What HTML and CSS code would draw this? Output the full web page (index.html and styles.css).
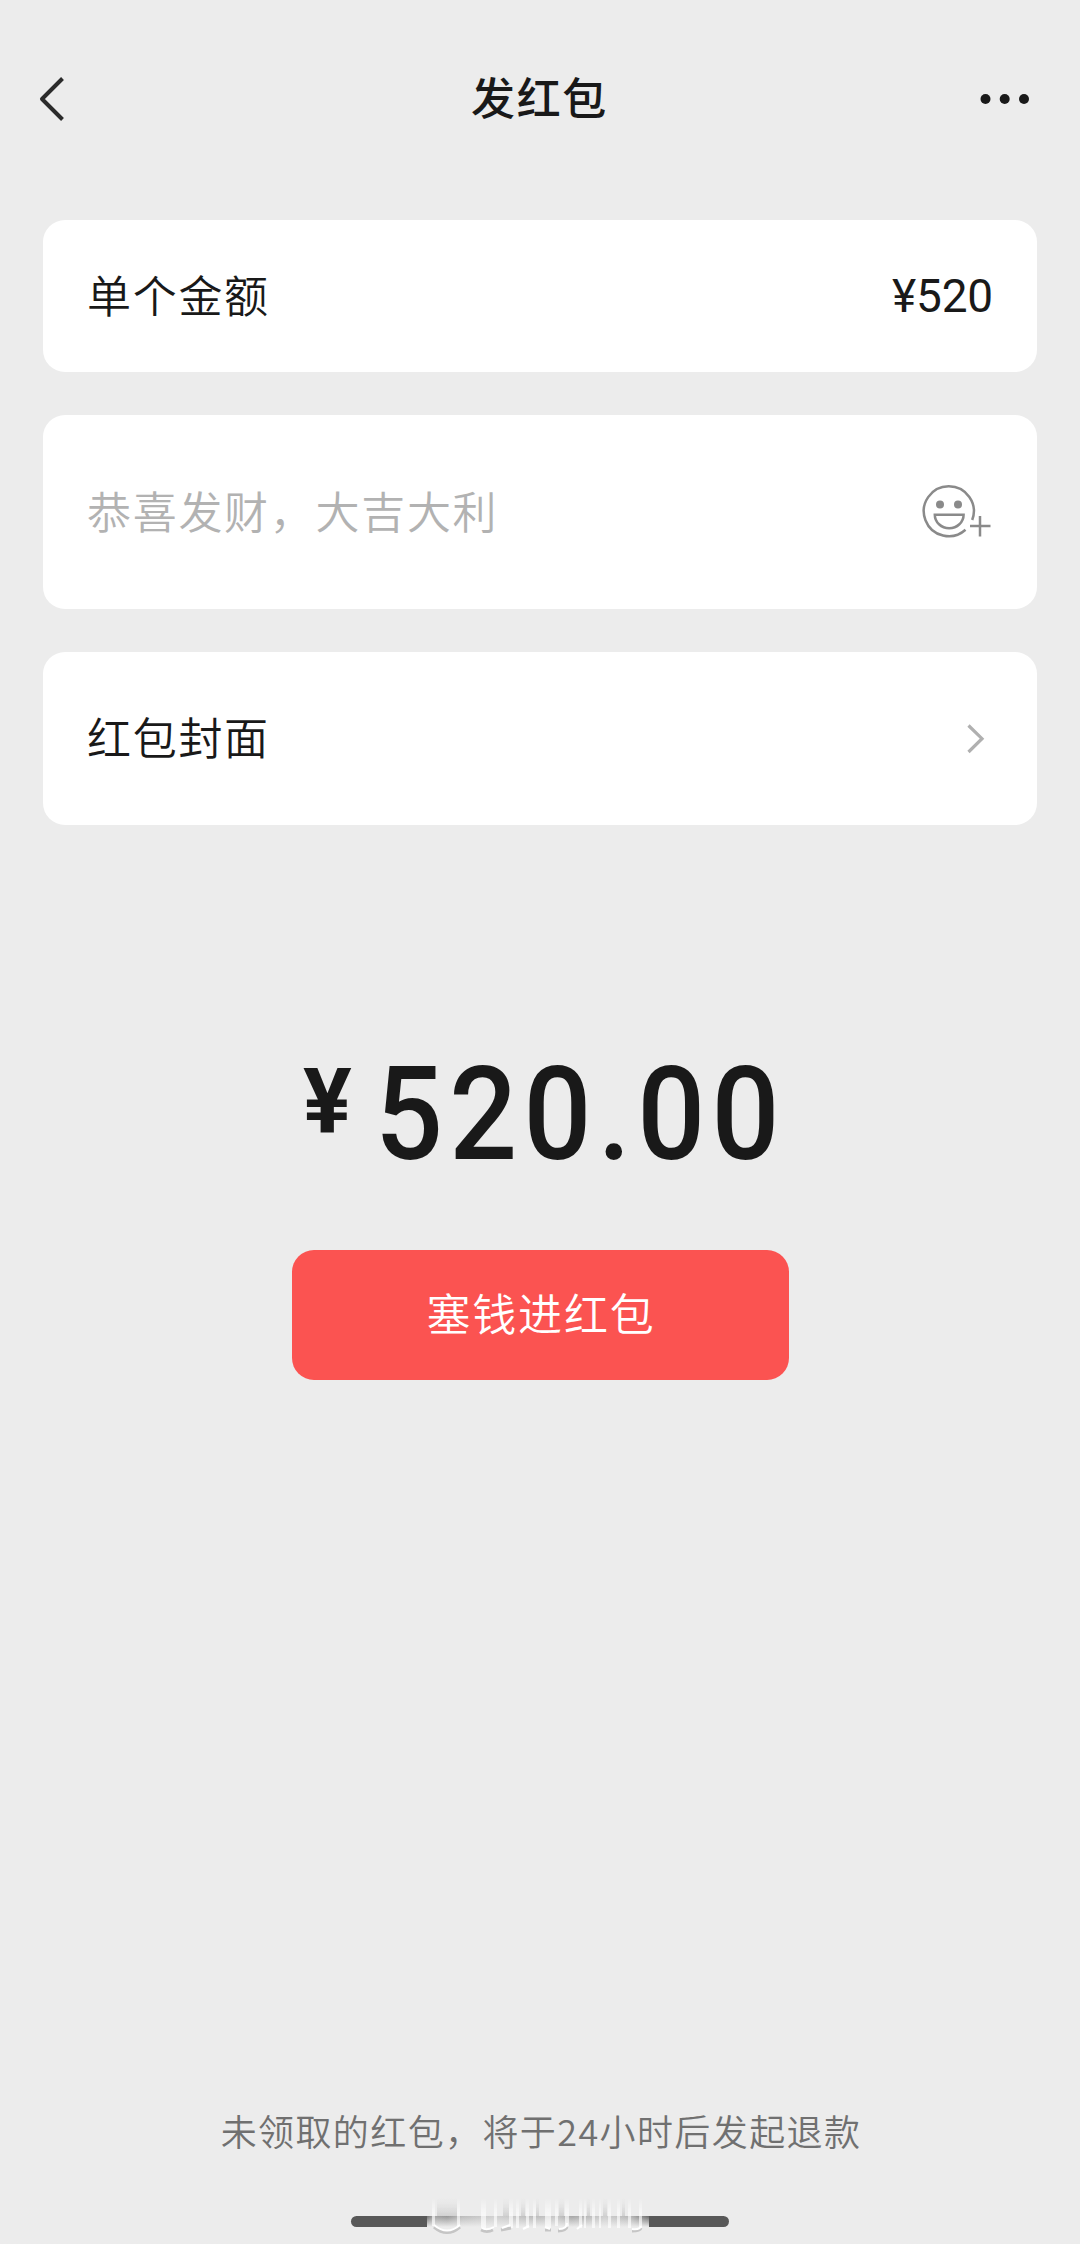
FILE: index.html
```html
<!DOCTYPE html>
<html lang="zh-CN">
<head>
<meta charset="utf-8">
<title>发红包</title>
<link rel="stylesheet" href="styles.css">
</head>
<body>
<div class="screen">
  <header class="nav">
    <svg class="nav-back" width="30" height="50" viewBox="0 0 30 50"><path d="M24.500 4.500 4 25l20.500 20.500" fill="none" stroke="#2b2b2b" stroke-width="4" stroke-linejoin="round"/></svg>
    <h1 class="nav-title">发红包</h1>
    <svg class="nav-more" width="50" height="12" viewBox="0 0 50 12" fill="#191919"><circle cx="5.500" cy="6" r="5"/><circle cx="24.700" cy="6" r="5"/><circle cx="44" cy="6" r="5"/></svg>
  </header>
  <main class="form">
    <section class="card card-amount">
      <span class="label">单个金额</span>
      <span class="value">¥520</span>
    </section>
    <section class="card card-wish">
      <span class="label placeholder">恭喜发财，大吉大利</span>
      <svg class="emoji" width="70" height="56" viewBox="0 0 70 56" fill="none" stroke="#8a8a8a" stroke-width="2.500">
        <path d="M43.500 45.800A25 25 0 1 1 50.200 36"/>
        <circle cx="18" cy="20.500" r="4" fill="#8a8a8a" stroke="none"/>
        <circle cx="36" cy="20.500" r="4" fill="#8a8a8a" stroke="none"/>
        <path d="M12.800 30.700h28.800a14.400 13.500 0 0 1-28.800 0z"/>
        <path d="M58 32v20.500M48 42h20.500"/>
      </svg>
    </section>
    <section class="card card-cover">
      <span class="label">红包封面</span>
      <svg class="chevron" width="20" height="32" viewBox="0 0 20 32"><path d="M2.500 2.500 16 15.700 2.500 29" fill="none" stroke="#b0b0b0" stroke-width="3.200"/></svg>
    </section>
  </main>
  <div class="total"><span class="currency">¥</span><span class="sum">520.00</span></div>
  <button class="pay">塞钱进红包</button>
  <p class="notice">未领取的红包，将于24小时后发起退款</p>
  <div class="home-bar">
    <svg class="smear" width="222" height="50" viewBox="0 0 222 50">
      <defs>
        <linearGradient id="band" x1="0" x2="1" y1="0" y2="0">
          <stop offset="0" stop-color="#707070"/><stop offset=".03" stop-color="#a4a4a4"/><stop offset=".09" stop-color="#969696"/><stop offset=".16" stop-color="#bcbcbc"/><stop offset=".3" stop-color="#d0d0d0"/><stop offset=".48" stop-color="#bababa"/><stop offset=".58" stop-color="#c8c8c8"/><stop offset=".65" stop-color="#a5a5a5"/><stop offset=".8" stop-color="#cecece"/><stop offset=".92" stop-color="#b4b4b4"/><stop offset="1" stop-color="#686868"/>
        </linearGradient>
        <linearGradient id="fade" x1="0" x2="0" y1="0" y2="1">
          <stop offset="0" stop-color="#fff" stop-opacity="0"/><stop offset=".5" stop-color="#fff" stop-opacity=".6"/><stop offset="1" stop-color="#fff" stop-opacity=".7"/>
        </linearGradient>
        <linearGradient id="soft" x1="0" x2="0" y1="0" y2="1">
          <stop offset="0" stop-color="#ddd" stop-opacity="0"/><stop offset="1" stop-color="#c8c8c8" stop-opacity=".75"/>
        </linearGradient>
        <linearGradient id="lower" x1="0" x2="0" y1="0" y2="1">
          <stop offset="0" stop-color="#ececec" stop-opacity="0"/><stop offset="1" stop-color="#ececec"/>
        </linearGradient>
        <filter id="blur" x="-5%" y="-5%" width="110%" height="110%"><feGaussianBlur stdDeviation=".7 .4"/></filter>
      </defs>
      <path d="M0 26h222v11H0z" fill="url(#band)"/>
      <path d="M0 26h222v11H0z" fill="url(#lower)"/>
      <g filter="url(#blur)">
        <path d="M10 8h20v18H10zM76 8h6v18h-6zM94 8h4v18h-4zM109 8h3v18h-3zM132 8h5v18h-5zM160 8h3v18h-3zM176 8h4v18h-4zM195 8h3v18h-3z" fill="url(#soft)"/>
        <path d="M5 8h3v28H5zM30 8h3v28h-3zM54 8h5v30h-5zM67 8h3v29h-3zM82 8h4v30h-4zM89 8h3v30h-3zM99 8h3v30h-3zM106 8h3v30h-3zM118 8h6v30h-6zM128 8h3v28h-3zM138 8h4v28h-4zM152 8h3v30h-3zM157 8h2v30h-2zM165 8h3v30h-3zM172 8h2v30h-2zM181 8h3v30h-3zM190 8h3v30h-3zM201 8h3v30h-3zM212 8h3v30h-3z" fill="url(#fade)"/>
        <path d="M7 37q13 11 26 0M54 40q6 3 12 0M74 40l10-2M118 40h6M131 41q8 0 9-4M205 41q8 0 9-3" fill="none" stroke="#c5c5c5" stroke-width="3"/>
        <path d="M7 35q13 11 26 0M55 38q5 3 12-1M75 38l8-3M96 39l6-3M118 37l5 2M132 39q8 0 8-6M150 39l5-4M205 39q8 1 9-3" fill="none" stroke="#fff" stroke-width="2"/>
      </g>
    </svg>
  </div>
</div>
</body>
</html>
```
FILE: styles.css
```css
* { box-sizing: border-box; }
body {
  margin: 0;
  background: #ececec;
  color: #191919;
  font-family: "Noto Sans CJK SC", sans-serif;
}
.screen {
  width: 1080px;
  height: 2244px;
  display: flex;
  flex-direction: column;
  align-items: center;
  overflow: hidden;
}
.nav {
  width: 100%;
  height: 197px;
  padding: 0 50px 0 38px;
  display: grid;
  grid-template-columns: 1fr auto 1fr;
  align-items: center;
  flex: none;
}
.nav-more { justify-self: end; }
.nav-title {
  margin: 0;
  padding: 0 0 5px 11px;
  font-size: 44px;
  line-height: 60px;
  font-weight: 500;
  letter-spacing: 1.700px;
}
.form {
  width: 994px;
  margin-top: 23px;
  display: flex;
  flex-direction: column;
  gap: 43px;
}
.card {
  display: flex;
  align-items: center;
  justify-content: space-between;
  padding: 0 44px;
  background: #fff;
  border-radius: 22px;
}
.card-amount { height: 152px; }
.card-wish { height: 194px; }
.card-cover { height: 173px; }
.label {
  padding-bottom: 5px;
  font-size: 44px;
  line-height: 60px;
  letter-spacing: 1.700px;
  font-weight: 350;
}
.placeholder { color: #b2b2b2; }
.value {
  font-family: Roboto, sans-serif;
  font-size: 46px;
  line-height: 60px;
  letter-spacing: -0.200px;
}
.emoji { margin-right: 1px; }
.chevron { margin-right: 7px; }
.total {
  align-self: flex-start;
  margin-top: 225px;
  padding-left: 303px;
  height: 130px;
  display: flex;
  align-items: flex-start;
  font-family: Roboto, sans-serif;
  line-height: 130px;
}
.currency {
  width: 72px;
  font-size: 91px;
  font-weight: 700;
  line-height: 105px;
}
.sum {
  font-size: 130px;
  font-weight: 500;
  letter-spacing: 6.800px;
  transform: scaleX(0.92);
  transform-origin: left;
}
.pay {
  width: 497px;
  height: 130px;
  margin-top: 70px;
  padding: 0 0 6px 2px;
  border: 0;
  border-radius: 22px;
  background: #fb5351;
  color: #fff;
  font: 350 44px/60px "Noto Sans CJK SC", sans-serif;
  letter-spacing: 1.800px;
}
.notice {
  margin: auto 0 0;
  padding: 0 0 61px 2px;
  color: #707070;
  font-size: 36px;
  font-weight: 350;
  line-height: 50px;
  letter-spacing: 1.400px;
}
.home-bar {
  position: relative;
  width: 378px;
  height: 11px;
  flex: none;
  margin-bottom: 17px;
  border-radius: 6px;
  background: #585858;
}
.smear {
  position: absolute;
  left: 76px;
  top: -26px;
}
```
